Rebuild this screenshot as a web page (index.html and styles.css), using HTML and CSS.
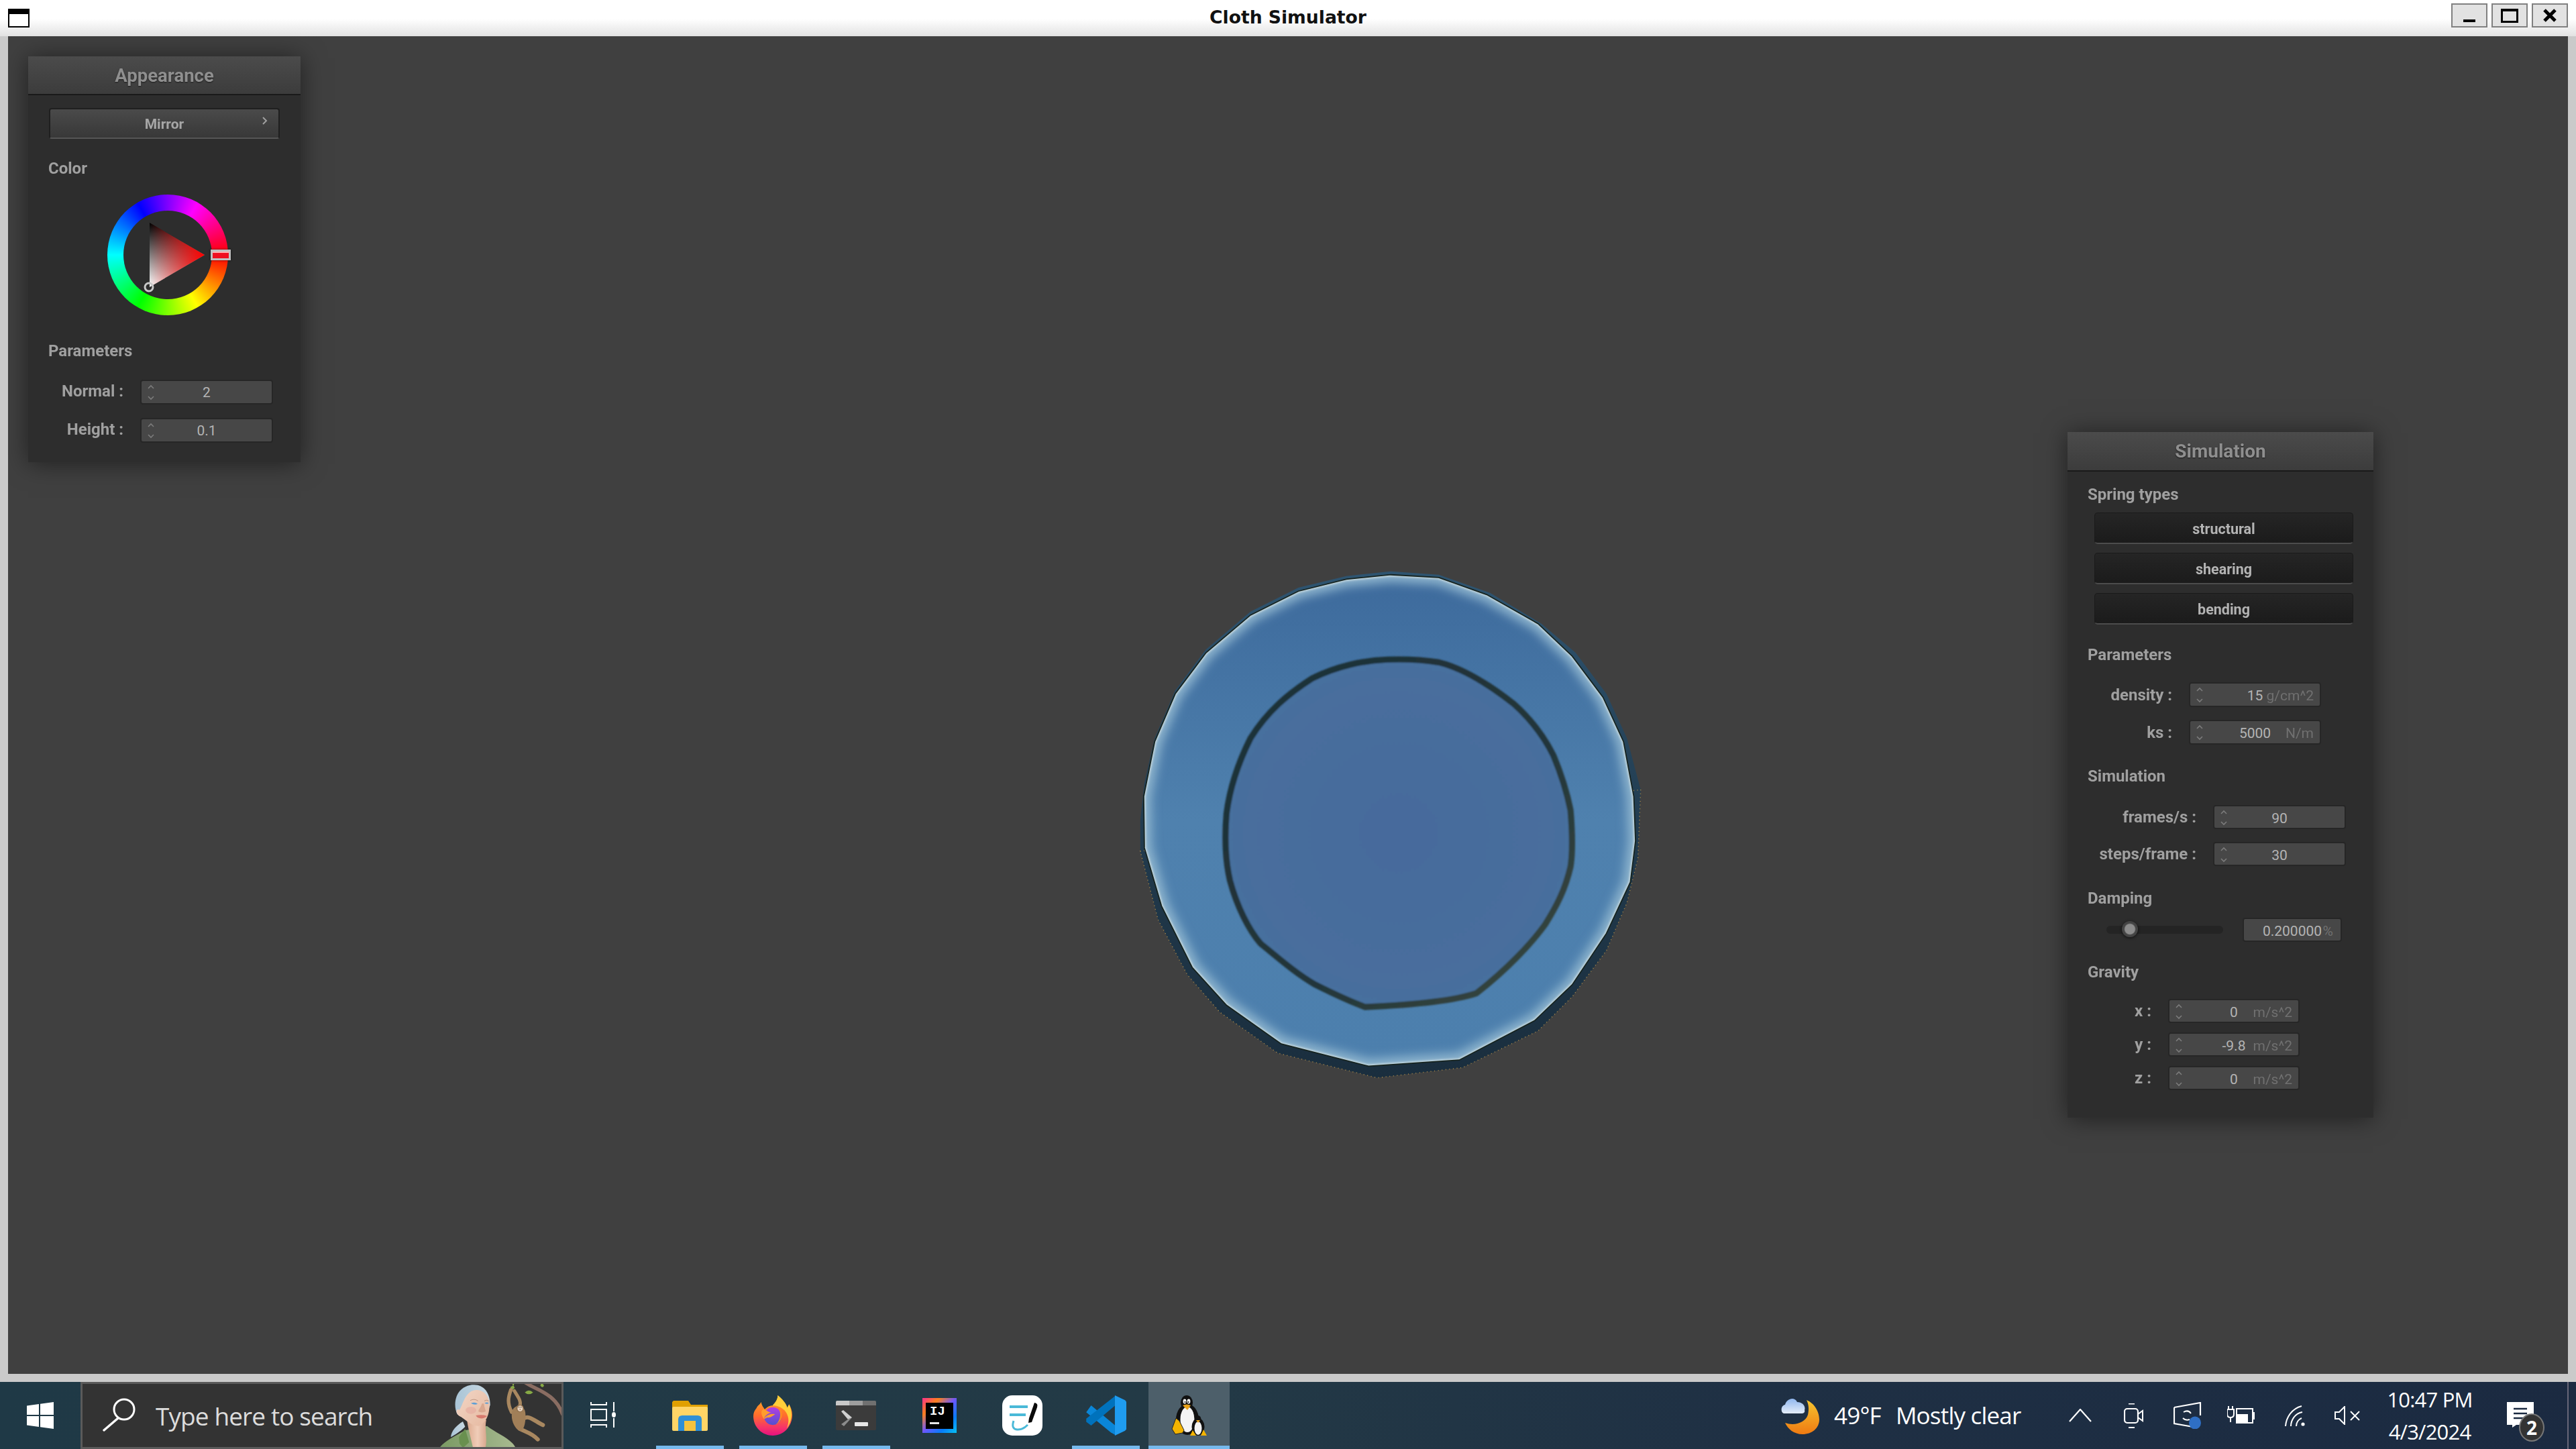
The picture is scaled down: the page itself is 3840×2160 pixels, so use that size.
FILE: index.html
```html
<!DOCTYPE html>
<html lang="en">
<head>
<meta charset="utf-8">
<title>Cloth Simulator</title>
<link rel="stylesheet" href="styles.css">
</head>
<body>
<svg class="defs" width="0" height="0" aria-hidden="true">
  <symbol id="spin" viewBox="0 0 12 24"><path d="M2 6 L6 2 L10 6 M2 18 L6 22 L10 18" fill="none" stroke="#7c7c7c" stroke-width="1.6"/></symbol>
</svg>
<div class="screen">
  <header class="titlebar">
    <span class="app-icon"></span>
    <span class="title">Cloth Simulator</span>
    <div class="win-btns">
      <span class="win-btn"><svg width="50" height="32" viewBox="0 0 50 32"><rect x="16" y="22" width="18" height="4" fill="#000"/></svg></span>
      <span class="win-btn"><svg width="50" height="32" viewBox="0 0 50 32"><rect x="13.5" y="7.5" width="23" height="18" fill="none" stroke="#000" stroke-width="3"/><rect x="12" y="6" width="26" height="4" fill="#000"/></svg></span>
      <span class="win-btn"><svg width="50" height="32" viewBox="0 0 50 32"><path d="M17 8 L33 24 M33 8 L17 24" stroke="#000" stroke-width="5"/></svg></span>
    </div>
  </header>

  <div class="frame">
    <main class="viewport">
      <svg class="cloth" viewBox="0 0 1568 1568" aria-hidden="true">
        <defs>
          <linearGradient id="ringFill" x1="0" y1="0" x2="0" y2="1"><stop offset="0" stop-color="#3d6a9c"/><stop offset=".5" stop-color="#4f81ae"/><stop offset="1" stop-color="#4c7fad"/></linearGradient>
          <radialGradient id="innerFill" cx=".5" cy=".5" r=".55"><stop offset="0" stop-color="#476b9c"/><stop offset=".8" stop-color="#486e9d"/><stop offset="1" stop-color="#44709f"/></radialGradient>
          <linearGradient id="rimDark" x1="0" y1="0" x2="0" y2="1"><stop offset="0" stop-color="#2e5470"/><stop offset=".6" stop-color="#20384a"/><stop offset="1" stop-color="#1a2e3e"/></linearGradient>
          <linearGradient id="ringEdge" x1="0" y1="0" x2="1" y2="1"><stop offset="0" stop-color="#1d2f38"/><stop offset=".6" stop-color="#23363a"/><stop offset="1" stop-color="#3d4a3e"/></linearGradient>
          <filter id="soft12" x="-10%" y="-10%" width="120%" height="120%"><feGaussianBlur stdDeviation="15"/></filter>
          <filter id="soft2" x="-10%" y="-10%" width="120%" height="120%"><feGaussianBlur stdDeviation="3"/></filter>
          <filter id="soft3" x="-10%" y="-10%" width="120%" height="120%"><feGaussianBlur stdDeviation="2.2"/></filter>
          <clipPath id="discClip"><polygon points="810,72 950,80 1090,130 1240,215 1340,310 1430,430 1490,560 1520,720 1525,850 1510,970 1440,1120 1340,1270 1230,1375 1010,1490 745,1508 490,1443 330,1330 230,1220 140,1040 90,870 88,720 120,560 180,420 270,300 400,190 540,120 680,85"/></clipPath>
        </defs>
        <polygon fill="url(#rimDark)" points="810,62 950,72 1100,125 1250,215 1350,300 1440,420 1500,550 1540,700 1532,900 1500,1030 1440,1170 1340,1305 1240,1405 1020,1512 770,1542 480,1470 310,1350 215,1240 130,1080 78,880 78,790 90,680 120,550 180,410 270,290 400,180 540,110 680,76"/>
        <polygon fill="none" stroke="#a98a4a" stroke-width="3" stroke-dasharray="2 9" points="1540,700 1532,900 1500,1030 1440,1170 1340,1305 1240,1405 1020,1512 770,1542 480,1470 310,1350 215,1240 130,1080 78,880"/>
        <polygon fill="url(#ringFill)" points="810,72 950,80 1090,130 1240,215 1340,310 1430,430 1490,560 1520,720 1525,850 1510,970 1440,1120 1340,1270 1230,1375 1010,1490 745,1508 490,1443 330,1330 230,1220 140,1040 90,870 88,720 120,560 180,420 270,300 400,190 540,120 680,85"/>
        <g clip-path="url(#discClip)">
          <polygon filter="url(#soft12)" fill="none" stroke="#8fb6cf" stroke-width="42" points="810,72 950,80 1090,130 1240,215 1340,310 1430,430 1490,560 1520,720 1525,850 1510,970 1440,1120 1340,1270 1230,1375 1010,1490 745,1508 490,1443 330,1330 230,1220 140,1040 90,870 88,720 120,560 180,420 270,300 400,190 540,120 680,85"/>
          <polygon filter="url(#soft2)" fill="none" stroke="#d8e4e4" stroke-width="10" opacity=".8" points="810,72 950,80 1090,130 1240,215 1340,310 1430,430 1490,560 1520,720 1525,850 1510,970 1440,1120 1340,1270 1230,1375 1010,1490 745,1508 490,1443 330,1330 230,1220 140,1040 90,870 88,720 120,560 180,420 270,300 400,190 540,120 680,85"/>
        </g>
        <polygon fill="none" stroke="#16231f" stroke-width="3.5" points="810,72 950,80 1090,130 1240,215 1340,310 1430,430 1490,560 1520,720 1525,850 1510,970 1440,1120 1340,1270 1230,1375 1010,1490 745,1508 490,1443 330,1330 230,1220 140,1040 90,870 88,720 120,560 180,420 270,300 400,190 540,120 680,85"/>
        <path fill="url(#innerFill)" stroke="url(#ringEdge)" stroke-width="18" stroke-linejoin="round" filter="url(#soft3)" d="M800 320 C860 318 900 320 950 328 C1020 345 1100 395 1170 450 C1220 495 1260 550 1285 600 C1310 660 1325 710 1335 760 C1340 820 1342 880 1335 925 C1320 990 1295 1040 1260 1095 C1220 1150 1150 1225 1060 1295 C1000 1315 900 1328 735 1335 C680 1315 630 1290 590 1270 C530 1235 480 1190 430 1150 C395 1110 360 1040 340 965 C325 900 325 830 330 770 C340 690 365 620 400 550 C450 470 510 420 580 375 C650 340 730 322 800 320 Z"/>
      </svg>

      <section class="panel panel-appearance">
        <h2 class="panel-title">Appearance</h2>
        <button class="combo"><span>Mirror</span><svg class="combo-arrow" width="8" height="12" viewBox="0 0 8 12"><path d="M1 1 L6 6 L1 11" fill="none" stroke="#a0a0a0" stroke-width="2"/></svg></button>
        <h3 class="group group-color">Color</h3>
        <div class="wheel">
          <div class="wheel-ring"></div>
          <svg class="wheel-tri" width="180" height="180" viewBox="0 0 180 180">
            <defs>
              <linearGradient id="triBase" x1="0" y1="42" x2="0" y2="138" gradientUnits="userSpaceOnUse"><stop offset="0" stop-color="#000"/><stop offset="1" stop-color="#fff"/></linearGradient>
              <linearGradient id="triRed" x1="63" y1="0" x2="145" y2="0" gradientUnits="userSpaceOnUse"><stop offset="0" stop-color="#f00" stop-opacity="0"/><stop offset="1" stop-color="#f00"/></linearGradient>
            </defs>
            <polygon points="63,42 145,90 63,138" fill="url(#triBase)"/>
            <polygon points="63,42 145,90 63,138" fill="url(#triRed)"/>
            <circle cx="62" cy="138" r="6" fill="none" stroke="#c8c8c8" stroke-width="3"/>
          </svg>
          <span class="wheel-mark"></span>
        </div>
        <h3 class="group group-params">Parameters</h3>
        <div class="rows rows-a">
          <div class="row"><label>Normal :</label><div class="num"><svg class="spin"><use href="#spin"/></svg><span>2</span></div></div>
          <div class="row"><label>Height :</label><div class="num"><svg class="spin"><use href="#spin"/></svg><span>0.1</span></div></div>
        </div>
      </section>

      <section class="panel panel-sim">
        <h2 class="panel-title title-sim">Simulation</h2>
        <h3 class="group group-spring">Spring types</h3>
        <div class="toggles">
          <button class="toggle">structural</button>
          <button class="toggle">shearing</button>
          <button class="toggle">bending</button>
        </div>
        <h3 class="group group-p2">Parameters</h3>
        <div class="rows rows-b">
          <div class="row"><label>density :</label><div class="num"><svg class="spin"><use href="#spin"/></svg><span>15</span><em>g/cm^2</em></div></div>
          <div class="row"><label>ks :</label><div class="num"><svg class="spin"><use href="#spin"/></svg><span>5000</span><em>N/m</em></div></div>
        </div>
        <h3 class="group group-s2">Simulation</h3>
        <div class="rows rows-c">
          <div class="row"><label>frames/s :</label><div class="num"><svg class="spin"><use href="#spin"/></svg><span>90</span></div></div>
          <div class="row"><label>steps/frame :</label><div class="num"><svg class="spin"><use href="#spin"/></svg><span>30</span></div></div>
        </div>
        <h3 class="group group-damp">Damping</h3>
        <div class="slider-row">
          <div class="track"><span class="knob"></span></div>
          <div class="num num-pct"><span>0.200000</span><em>%</em></div>
        </div>
        <h3 class="group group-grav">Gravity</h3>
        <div class="rows rows-d">
          <div class="row"><label>x :</label><div class="num"><svg class="spin"><use href="#spin"/></svg><span>0</span><em>m/s^2</em></div></div>
          <div class="row"><label>y :</label><div class="num"><svg class="spin"><use href="#spin"/></svg><span>-9.8</span><em>m/s^2</em></div></div>
          <div class="row"><label>z :</label><div class="num"><svg class="spin"><use href="#spin"/></svg><span>0</span><em>m/s^2</em></div></div>
        </div>
      </section>
    </main>
  </div>

  <footer class="taskbar">
    <div class="start">
      <svg width="40" height="40" viewBox="0 0 40 40"><path fill="#fff" d="M0 5.5 L18 3 V19 H0Z M20 2.7 L40 0 V19 H20Z M0 21 H18 V37 L0 34.5Z M20 21 H40 V40 L20 37.3Z"/></svg>
    </div>
    <div class="search">
      <svg class="search-icon" width="50" height="50" viewBox="0 0 50 50"><circle cx="33" cy="17" r="15" fill="none" stroke="#fff" stroke-width="3"/><path d="M24 30 L3 48" stroke="#fff" stroke-width="3.4" stroke-linecap="round"/></svg>
      <span class="search-text">Type here to search</span>
      <svg class="search-art" width="210" height="105" viewBox="0 0 630 315" aria-hidden="true">
        <defs>
          <linearGradient id="shirt" x1="0" y1="0" x2="1" y2="0"><stop offset="0" stop-color="#7a9a62"/><stop offset=".5" stop-color="#8fa87a"/><stop offset="1" stop-color="#a9ba90"/></linearGradient>
          <linearGradient id="hair" x1="0" y1="0" x2="1" y2="0"><stop offset="0" stop-color="#a9c4d6"/><stop offset="1" stop-color="#c9d9e2"/></linearGradient>
          <linearGradient id="neck" x1="0" y1="0" x2="1" y2="0"><stop offset="0" stop-color="#dca98e"/><stop offset=".55" stop-color="#f0cdb8"/><stop offset="1" stop-color="#d8a78e"/></linearGradient>
          <linearGradient id="face" x1="0" y1="0" x2="1" y2="1"><stop offset="0" stop-color="#f2d6c6"/><stop offset="1" stop-color="#e6b9a0"/></linearGradient>
        </defs>
        <path fill="url(#hair)" d="M96 262 C98 235 120 210 150 192 L160 215 C135 240 115 250 96 262Z"/>
        <path fill="url(#hair)" d="M125 160 C105 120 112 40 190 28 C240 22 272 60 272 118 L262 150 L170 190Z"/>
        <path fill="url(#shirt)" d="M42 315 C60 285 105 262 160 232 L258 212 C300 245 372 270 388 315Z"/>
        <path fill="#69904f" d="M132 262 L160 225 L178 285 L150 310 L135 290Z"/>
        <path fill="url(#neck)" d="M168 182 L255 185 C245 225 262 260 250 315 L196 315 C188 270 175 235 168 182Z"/>
        <path fill="url(#face)" d="M180 62 C212 38 262 55 268 108 C272 150 258 198 220 212 C180 210 155 175 135 168 C115 155 118 132 135 140 C150 115 155 82 180 62Z"/>
        <ellipse cx="186" cy="142" rx="24" ry="16" fill="#e5a89c" opacity=".6"/>
        <path d="M186 110 Q205 103 216 113 Q202 120 186 110Z" fill="#5d9fd6"/>
        <path d="M247 110 Q258 103 266 110 Q258 116 247 110Z" fill="#5d9fd6"/>
        <path d="M183 98 Q200 88 218 100 M246 100 Q256 93 266 100" stroke="#bd9580" stroke-width="3" fill="none"/>
        <path d="M235 112 C232 128 218 140 220 148 C230 153 245 152 252 146 C250 135 245 125 244 112" fill="#d9a78f"/>
        <path d="M208 165 Q235 160 258 167 Q245 180 228 178 Q214 176 208 165Z" fill="#d77a6e"/>
        <path stroke="#8a6d62" stroke-width="16" fill="none" stroke-linecap="round" d="M424 14 C470 50 560 60 596 160"/>
        <path fill="#86a945" d="M427 62 Q445 45 464 62 Q445 78 427 62Z M496 30 L504 16 L513 32 Q504 46 496 30Z M370 52 L362 38 L376 30 L382 42Z M372 14 L380 14 L378 30 L372 30Z"/>
        <g fill="none" stroke="#a98860" stroke-linecap="round" stroke-linejoin="round">
          <path stroke-width="16" d="M365 50 C352 85 348 110 368 150"/>
          <path stroke-width="15" d="M380 55 C395 80 412 100 405 120"/>
          <path stroke-width="18" d="M420 180 C445 160 470 190 508 208"/>
          <path stroke-width="18" d="M405 225 C435 240 460 245 485 272"/>
        </g>
        <path fill="#a17f58" d="M372 140 C390 110 430 120 430 160 C432 200 420 245 400 232 C380 220 360 180 372 140Z"/>
        <ellipse cx="405" cy="133" rx="17" ry="17" fill="#8e6f4d"/>
        <ellipse cx="406" cy="134" rx="12" ry="13" fill="#e8d4bf"/>
        <circle cx="401" cy="128" r="2" fill="#2c2118"/><circle cx="410" cy="128" r="2" fill="#2c2118"/>
        <circle cx="406" cy="138" r="2.5" fill="#7f5c44"/>
      </svg>
    </div>
    <div class="taskview">
      <svg width="40" height="38" viewBox="0 0 40 38"><path d="M1 0 V4 H24 V0 M1 38 V34 H24 V38 M1 11 H24 V27 H1Z M35 0 V14 M35 24 V38" fill="none" stroke="#fff" stroke-width="2"/><ellipse cx="35" cy="19" rx="3" ry="4" fill="#fff"/></svg>
    </div>
    <div class="apps">
      <div class="app running">
        <svg width="53" height="45" viewBox="0 0 53 45"><path fill="#e0a000" d="M2 0 H24 L28 6 H53 V14 H0 V2Z"/><rect y="9" width="53" height="36" rx="2" fill="#ffd566"/><path fill="#2f8fd6" d="M9 45 V28 Q9 22 15 22 H38 Q44 22 44 28 V45 H35 V30 H18 V45Z"/><rect x="18" y="30" width="17" height="15" fill="#f5c33e"/></svg>
      </div>
      <div class="app running">
        <svg width="58" height="60" viewBox="0 0 172 178">
          <defs>
            <linearGradient id="ffBody" x1="0" y1="0" x2="0" y2="1"><stop offset="0" stop-color="#ffb126"/><stop offset=".5" stop-color="#ff6d2c"/><stop offset=".8" stop-color="#f6336a"/><stop offset="1" stop-color="#e4117f"/></linearGradient>
            <linearGradient id="ffGlobe" x1="0" y1="0" x2="0" y2="1"><stop offset="0" stop-color="#b33ee0"/><stop offset="1" stop-color="#5350cf"/></linearGradient>
          </defs>
          <path fill="url(#ffBody)" d="M0 92 C0 142 40 178 86 178 C135 178 172 137 172 87 C172 68 166 54 158 40 L150 55 C140 28 122 12 108 0 C108 20 96 32 85 45 C70 45 60 52 50 62 C44 52 36 44 35 30 C28 42 20 44 14 56 C5 66 0 78 0 92Z"/>
          <path fill="#ffcf3a" d="M108 0 C126 14 146 36 150 55 L158 40 C172 68 176 108 148 146 C165 105 150 70 125 56 C108 46 95 45 85 45 C96 32 108 20 108 0Z"/>
          <circle cx="86" cy="92" r="39" fill="url(#ffGlobe)"/>
          <path fill="#ff9d2e" d="M46 104 C60 84 80 80 96 84 C84 92 76 100 60 98 C54 102 50 104 46 104Z M46 104 C30 80 34 60 50 62 C62 70 70 76 80 76 C64 80 52 90 46 104Z"/>
          <path fill="#ff8a22" d="M108 56 C125 70 122 110 100 128 C118 120 138 90 120 62Z"/>
        </svg>
      </div>
      <div class="app running">
        <svg width="60" height="44" viewBox="0 0 60 44">
          <rect width="60" height="44" rx="2" fill="#3b3b3b"/>
          <path fill="#c8c8c8" d="M0 7 V2 Q0 0 2 0 H20 V7Z"/><rect x="20" width="20" height="7" fill="#9e9e9e"/><path fill="#707070" d="M40 0 H58 Q60 0 60 2 V7 H40Z"/>
          <path fill="#d0d0d0" d="M8 16 L11 14 L24 25 L19 29Z"/><path fill="#8c8c8c" d="M19 27 L24 25 L12 38 L8 35Z"/>
          <rect x="28" y="32" width="20" height="6" rx="1" fill="#e6e6e6"/>
        </svg>
      </div>
      <div class="app">
        <svg width="51" height="52" viewBox="0 0 51 52">
          <defs><linearGradient id="ijEdge" x1="0" y1="0" x2="1" y2="1"><stop offset="0" stop-color="#ff318c"/><stop offset=".25" stop-color="#fc801d"/><stop offset=".5" stop-color="#6b57ff"/><stop offset=".75" stop-color="#087cfa"/><stop offset="1" stop-color="#07c3f2"/></linearGradient></defs>
          <rect width="51" height="52" fill="url(#ijEdge)"/>
          <rect x="5" y="7" width="41" height="39" fill="#000"/>
          <text x="11" y="25" class="ij-text">IJ</text>
          <rect x="11" y="36" width="14" height="3" fill="#e8e8e8"/>
        </svg>
      </div>
      <div class="app">
        <svg width="60" height="60" viewBox="0 0 60 60">
          <rect width="60" height="60" rx="15" fill="#fff"/>
          <rect x="11" y="15" width="27" height="4" fill="#4ab9d8"/><rect x="11" y="27" width="24" height="4" fill="#4ab9d8"/>
          <path d="M48 11 Q54 12 52 18 L44 40 L39 41 L40 34Z" fill="#0a0a0a"/>
          <path d="M17 38 Q13 50 22 51 Q30 52 38 44" fill="none" stroke="#4ab9d8" stroke-width="3"/>
        </svg>
      </div>
      <div class="app running">
        <svg width="61" height="60" viewBox="0 0 100 100" preserveAspectRatio="none">
          <polygon fill="#0a86d8" points="2,42 14,25 72,74 72,98 62,92"/>
          <polygon fill="#0072bc" points="72,2 72,26 14,75 2,66 2,58"/>
          <polygon fill="#1f9cf0" points="72,0 97,12 100,16 100,84 97,88 72,100 72,0"/>
        </svg>
      </div>
      <div class="app active">
        <svg width="54" height="60" viewBox="0 0 54 60">
          <ellipse cx="23" cy="11" rx="9" ry="11" fill="#111"/>
          <ellipse cx="24" cy="36" rx="17" ry="23" fill="#111"/>
          <ellipse cx="24" cy="36" rx="10.5" ry="19" fill="#f4f4f4"/>
          <ellipse cx="20" cy="9" rx="2.4" ry="3.4" fill="#fff"/><ellipse cx="26" cy="9" rx="2.4" ry="3.4" fill="#fff"/>
          <circle cx="20.5" cy="10" r="1" fill="#000"/><circle cx="25.5" cy="10" r="1" fill="#000"/>
          <path d="M17 15 Q23 12 29 15 L24 22Z" fill="#e9a21a"/>
          <path d="M1 50 L7 34 L12 38 L19 52 L17 56 L6 58Z" fill="#f4b400" stroke="#222" stroke-width="1"/>
          <ellipse cx="40" cy="47" rx="9.5" ry="13" fill="#111"/>
          <ellipse cx="40" cy="36" rx="4.5" ry="6" fill="#111"/>
          <ellipse cx="40" cy="49" rx="5.5" ry="10" fill="#f4f4f4"/>
          <path d="M37 37 L43 37 L40 41Z" fill="#e9a21a"/>
          <path d="M28 60 L32 52 L37 60Z M44 60 L48 51 L53 60Z" fill="#f4b400"/>
        </svg>
      </div>
    </div>
    <div class="weather">
      <svg width="57" height="55" viewBox="0 0 57 55">
        <defs>
          <linearGradient id="moon" x1="0" y1="0" x2="0" y2="1"><stop offset="0" stop-color="#f6c42e"/><stop offset="1" stop-color="#ef7a12"/></linearGradient>
          <linearGradient id="cloud" x1="0" y1="0" x2="0" y2="1"><stop offset="0" stop-color="#8fb6ee"/><stop offset="1" stop-color="#e4edf9"/></linearGradient>
        </defs>
        <path fill="url(#moon)" d="M38 4 C52 10 57 24 57 33 C57 46 46 55 32 55 C19 55 10 47 6 38 C20 43 36 38 40 26 C42 17 41 10 38 4Z"/>
        <path fill="url(#cloud)" d="M5 24 C-1 24 -1 12 6 11 C8 2 20 -2 24 7 C32 7 37 13 35 19 C36 22 34 24 31 24Z"/>
      </svg>
      <span class="wx-text wx-temp">49°F</span>
      <span class="wx-text wx-desc">Mostly clear</span>
    </div>
    <div class="tray">
      <span class="tray-cell"><svg width="34" height="20" viewBox="0 0 34 20"><path d="M1 19 L17 1 L33 19" fill="none" stroke="#fff" stroke-width="2.2"/></svg></span>
      <span class="tray-cell"><svg width="30" height="37" viewBox="0 0 30 37"><path d="M7 0.5 H16 M7 36 H16" stroke="#fff" stroke-width="2" fill="none"/><rect x="1" y="8" width="20" height="21" rx="4" fill="none" stroke="#fff" stroke-width="2.2"/><path d="M21 16 L28 11 V26 L21 21" fill="none" stroke="#fff" stroke-width="2"/></svg></span>
      <span class="tray-cell"><svg width="42" height="40" viewBox="0 0 42 40"><path d="M1 8 L40 1 V20 M29 37 L1 32 V8" fill="none" stroke="#fff" stroke-width="2.2"/><path d="M15 15 Q22 11 26 17 M14 24 Q18 28 24 26" fill="none" stroke="#fff" stroke-width="2"/><ellipse cx="32" cy="31" rx="9" ry="9.5" fill="#2f6fc4"/></svg></span>
      <span class="tray-cell"><svg width="42" height="28" viewBox="0 0 42 28"><path d="M2 0 V5 M8 0 V5 M0 5 H10 V12 Q10 17 5 17 Q0 17 0 12Z M5 17 V24" fill="none" stroke="#fff" stroke-width="2"/><rect x="14" y="4" width="24" height="21" fill="none" stroke="#fff" stroke-width="2"/><rect x="14" y="12" width="17" height="13" fill="#fff"/><rect x="38" y="9" width="3" height="11" fill="#fff"/></svg></span>
      <span class="tray-cell tray-wifi"><svg width="32" height="31" viewBox="0 0 32 31"><path d="M1 31 C2 18 10 5 25 1 M9 31 C9 22 15 12 26 10 M17 31 C17 26 20 21 25 19" fill="none" stroke="#fff" stroke-width="2"/><circle cx="27" cy="28" r="2.6" fill="#fff"/></svg></span>
      <span class="tray-cell tray-vol"><svg width="38" height="28" viewBox="0 0 38 28"><path d="M1 9 H7 L15 1 V27 L7 19 H1Z" fill="none" stroke="#fff" stroke-width="2"/><path d="M24 8 L37 21 M37 8 L24 21" stroke="#fff" stroke-width="2"/></svg></span>
    </div>
    <div class="clock"><span>10:47 PM</span><span>4/3/2024</span></div>
    <div class="notify">
      <svg width="40" height="38" viewBox="0 0 40 38"><path d="M0 0 H40 V34 H14 L8 38 V34 H0Z" fill="#fff"/><path d="M10 10 H30 M10 17 H30 M10 24 H26" stroke="#1b2a41" stroke-width="2.4"/></svg>
      <span class="badge">2</span>
    </div>
    <div class="show-desktop"></div>
  </footer>
</div>
</body>
</html>
```

FILE: styles.css
```css
* { box-sizing: border-box; }
html, body { margin: 0; padding: 0; }
body { background: #000; font-family: "Roboto", "Liberation Sans", sans-serif; }
.defs { position: absolute; }

.screen { width: 3840px; height: 2160px; display: flex; flex-direction: column; overflow: hidden; }

/* title bar */
.titlebar {
  height: 54px; flex: none; position: relative; display: flex; align-items: center;
  padding: 0 12px;
  background: linear-gradient(180deg, #fff 0, #fff 52%, #e2e2e2 100%);
}
.app-icon { width: 32px; height: 28px; margin-top: -1px; border: 2px solid #000; border-top-width: 8px; background: #fff; }
.title {
  position: absolute; left: 0; right: 0; text-align: center; top: 11px;
  font: bold 26.6px/30px "DejaVu Sans", sans-serif; color: #111;
}
.win-btns { margin-left: auto; display: flex; gap: 6px; margin-top: -8px; position: relative; }
.win-btn { width: 54px; height: 36px; background: #e2e2e2; border: 2px solid #808080; display: block; }
.win-btn svg { display: block; }

/* gl window */
.frame { flex: 1; display: flex; background: #cacaca; padding: 0 12px 12px; min-height: 0; }
.viewport { flex: 1; position: relative; background: #404040; overflow: hidden; }
.cloth { position: absolute; left: 1648px; top: 766px; width: 800px; height: 800px; }

/* panels */
.panel {
  position: absolute; background: #2d2d2d; color: #a8a8a8;
  box-shadow: 0 2px 34px rgba(0, 0, 0, .5);
  filter: blur(.55px);
}
.panel-appearance { left: 30px; top: 30px; width: 406px; height: 605px; }
.panel-sim { left: 3070px; top: 590px; width: 456px; height: 1022px; }
.panel-title {
  margin: 0; height: 58px; text-align: center;
  font: bold 27.5px/57px "Roboto", sans-serif; color: #8f8f8f;
  background: linear-gradient(180deg, #4b4b4b, #3c3c3c);
  border-bottom: 2px solid #1a1a1a;
  text-shadow: 0 1px 2px rgba(0, 0, 0, .6);
}
.title-sim { height: 59px; line-height: 57px; font-size: 28px; }
.group { margin: 0; padding-left: 30px; font: bold 24px/28px "Roboto", sans-serif; color: #a0a0a0; }

.combo {
  display: block; position: relative; width: 344px; height: 46px; margin: 19px 0 0 31px; padding: 0;
  background: linear-gradient(180deg, #4a4a4a, #383838);
  border: 2px solid #1f1f1f; border-bottom-color: #555; border-radius: 4px;
  font: bold 21px/44px "Roboto", sans-serif; color: #a6a6a6;
}
.combo-arrow { position: absolute; right: 16px; top: 11px; }
.group-color { margin-top: 30px; }
.wheel { position: relative; width: 180px; height: 180px; margin: 25px 0 0 118px; }
.wheel-ring {
  position: absolute; inset: 0; border-radius: 50%;
  background: conic-gradient(from 90deg, #f00, #ff0, #0f0, #0ff, #00f, #f0f, #f00);
}
.wheel-ring::after {
  content: ""; position: absolute; inset: 24px; border-radius: 50%; background: #2d2d2d;
}
.wheel-tri { position: absolute; left: 0; top: 0; }
.wheel-mark {
  position: absolute; left: 154px; top: 82px; width: 30px; height: 16px;
  background: #f01020; border: 3px solid #c0c0c0; box-shadow: 0 0 3px rgba(0, 0, 0, .7), inset 0 2px 0 #ffb0b0;
}
.group-params { margin-top: 39px; }

.rows { display: flex; flex-direction: column; }
.row { display: grid; column-gap: 25px; align-items: center; }
.row label { text-align: right; font: bold 24px/28px "Roboto", sans-serif; color: #a0a0a0; }
.rows-a label { margin-top: -3px; }
.num {
  position: relative; height: 37px; text-align: center;
  background: #474747; border: 2px solid #262626; border-radius: 4px;
  font: 21px/35px "Roboto", sans-serif; color: #b4b4b4;
}
.num em { position: absolute; right: 9px; top: 0; font-style: normal; color: #707070; }
.spin { position: absolute; left: 8px; top: 5px; width: 12px; height: 24px; }

.rows-a { margin-top: 29px; gap: 20px; }
.rows-a .row { grid-template-columns: 142px 198px; }
.group-spring { margin-top: 20px; }
.toggles { display: flex; flex-direction: column; gap: 13px; margin: 13px 0 0 40px; width: 386px; }
.toggle {
  height: 47px; padding: 0;
  background: linear-gradient(180deg, #252525, #1b1b1b);
  border: 1px solid #1a1a1a; border-bottom: 2px solid #4c4c4c; border-radius: 5px;
  font: bold 21.5px/47px "Roboto", sans-serif; color: #b4b4b4;
}
.group-p2 { margin-top: 31px; }
.rows-b { margin-top: 27px; gap: 19px; }
.rows-b .row { grid-template-columns: 156px 197px; }
.rows-b .num { line-height: 37px; }
.group-s2 { margin-top: 33px; }
.rows-c { margin-top: 29px; gap: 19px; }
.rows-c .row { grid-template-columns: 192px 198px; }
.group-damp { margin-top: 34px; }
.slider-row { display: flex; align-items: center; margin: 15px 0 0 58px; }
.track { position: relative; width: 174px; height: 12px; background: #242424; border-radius: 6px; }
.knob {
  position: absolute; left: 23px; top: -7px; width: 24px; height: 24px; border-radius: 50%;
  background: radial-gradient(circle, #8c8c8c 0, #8c8c8c 42%, #454545 52%, #3c3c3c 100%);
  box-shadow: 0 1px 4px rgba(0, 0, 0, .7);
}
.num-pct { width: 148px; height: 36px; margin-left: 29px; line-height: 37px; }
.num-pct em { right: 11px; }
.group-grav { margin-top: 31px; }
.rows-d { margin-top: 26px; gap: 14px; }
.rows-d .row { grid-template-columns: 125px 196px; }
.rows-d .num, .rows-c .num { height: 36px; line-height: 37px; }

/* taskbar */
.taskbar {
  height: 100px; flex: none; display: flex; align-items: stretch; color: #fff;
  background: linear-gradient(90deg, #1f3946 0, #233a46 45%, #1f3044 68%, #1b2a41 100%);
}
.start { width: 120px; flex: none; display: flex; align-items: center; justify-content: center; }
.search {
  position: relative; width: 720px; flex: none; display: flex; align-items: center;
  background: #333; border: 3px solid #5a5a5a; overflow: hidden; padding-left: 29px;
}
.search-icon { margin-top: -2px; }
.search-text {
  margin-left: 30px; padding-top: 2px; font: 37px/40px "Open Sans", sans-serif; color: #dcdcdc; letter-spacing: -.9px;
}
.search-art { position: absolute; left: 517px; top: -8px; }
.taskview { width: 116px; flex: none; display: flex; align-items: center; padding-left: 40px; padding-bottom: 2px; }
.apps { display: flex; flex: none; margin-left: 10px; }
.app { position: relative; width: 124px; display: flex; align-items: center; justify-content: center; }
.app.running::after, .app.active::after {
  content: ""; position: absolute; left: 12px; right: 11px; bottom: 0; height: 5px; background: #76b9ed;
}
.app.active { background: #4d5f6a; width: 121px; margin-left: 2px; }
.app.active::after { left: 0; right: 0; }
.weather { flex: none; width: 1228px; display: flex; align-items: center; padding-left: 822px; }
.wx-text { font: 35px/40px "Open Sans", sans-serif; letter-spacing: -.8px; white-space: nowrap; }
.wx-temp { margin-left: 22px; }
.wx-desc { margin-left: 22px; }
.tray { flex: none; display: flex; }
.tray-cell { width: 80px; display: flex; align-items: center; justify-content: center; }
.tray-wifi { padding-left: 2px; }
.tray-vol { margin-left: -2px; }
.clock {
  flex: none; width: 166px; display: flex; flex-direction: column; align-items: center; justify-content: center; gap: 12px;
  font: 31px/36px "Open Sans", sans-serif; letter-spacing: -.8px;
}
.notify { position: relative; flex: none; width: 122px; display: flex; align-items: flex-start; padding: 30px 0 0 32px; }
.badge {
  position: absolute; left: 50px; top: 47px; width: 38px; height: 42px; border-radius: 50%;
  background: #333; border: 2px solid #777; text-align: center;
  font: bold 28px/38px "Open Sans", sans-serif; color: #fff;
}
.show-desktop { flex: 1; border-left: 2px solid #667; }
.ij-text { font: bold 19px "Liberation Mono", monospace; fill: #fff; }
```
